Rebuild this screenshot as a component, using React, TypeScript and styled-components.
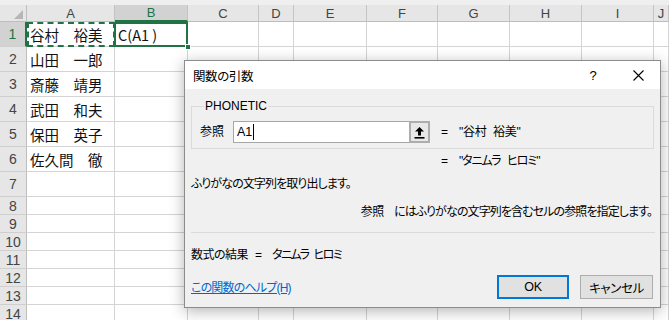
import React from "react";
import styled, { createGlobalStyle, css } from "styled-components";

const GlobalStyle = createGlobalStyle`
  html, body { margin: 0; padding: 0; background: #ffffff; overflow: hidden; }
  * { box-sizing: border-box; }
`;

const GREEN = "#217346";
const COLS = [27, 88, 73, 71, 35, 73, 71, 72, 72, 72];
const LETTERS = ["A", "B", "C", "D", "E", "F", "G", "H", "I", "J"];
const ROWS = [25, 25, 25, 25, 25, 25, 25, 18, 18, 18, 18, 18, 18, 18];
const NAMES = ["谷村　裕美", "山田　一郎", "斎藤　靖男", "武田　和夫", "保田　英子", "佐久間　徹"];

const Page = styled.div`
  position: relative;
  width: 669px;
  height: 320px;
  overflow: hidden;
  background: #ffffff;
`;

const Sheet = styled.div`
  display: flex;
  flex-direction: column;
`;

const TopStrip = styled.div`
  height: 5px;
  background: #efefef;
`;

const Grid = styled.div`
  display: grid;
  grid-template-columns: ${COLS.map((c) => c + "px").join(" ")} 1fr;
  grid-template-rows: 17px ${ROWS.map((r) => r + "px").join(" ")};
`;

const Corner = styled.div`
  background: #e6e6e6;
  border-right: 1px solid #bdbdbd;
  border-bottom: 1px solid #bdbdbd;
  display: flex;
  align-items: flex-end;
  justify-content: flex-end;
  padding: 0 3px 2px 0;
`;

const headerText = css`
  font-family: "Liberation Sans", "DejaVu Sans", sans-serif;
  font-size: 13px;
  color: #444;
`;

const ColHeader = styled.div<{ $active?: boolean }>`
  ${headerText};
  background: ${(p) => (p.$active ? "#d2d2d2" : "#e6e6e6")};
  color: ${(p) => (p.$active ? GREEN : "#444")};
  border-right: 1px solid #c4c4c4;
  border-bottom: ${(p) => (p.$active ? `2px solid ${GREEN}` : "1px solid #bdbdbd")};
  display: flex;
  align-items: center;
  justify-content: center;
  line-height: 1;
`;

const RowHeader = styled.div<{ $active?: boolean }>`
  ${headerText};
  font-size: 14px;
  background: ${(p) => (p.$active ? "#d2d2d2" : "#e6e6e6")};
  color: ${(p) => (p.$active ? GREEN : "#444")};
  border-right: ${(p) => (p.$active ? `2px solid ${GREEN}` : "1px solid #bdbdbd")};
  border-bottom: 1px solid #cfcfcf;
  display: flex;
  align-items: center;
  justify-content: center;
`;

const Cell = styled.div<{ $marquee?: boolean; $active?: boolean }>`
  position: relative;
  border-right: 1px solid #d4d4d4;
  border-bottom: 1px solid #d4d4d4;
  font-family: "Noto Sans CJK JP", sans-serif;
  font-size: 14.5px;
  color: #111;
  display: flex;
  align-items: center;
  padding: 1px 0 0 3px;
  white-space: nowrap;
  ${(p) =>
    p.$marquee &&
    css`
      &::after {
        content: "";
        position: absolute;
        left: 0;
        top: 0;
        right: -1px;
        bottom: -1px;
        border: 2px dashed ${GREEN};
        z-index: 2;
      }
    `}
  ${(p) =>
    p.$active &&
    css`
      &::after {
        content: "";
        position: absolute;
        left: -1px;
        top: 0;
        right: -1px;
        bottom: -1px;
        border: 2px solid ${GREEN};
        z-index: 3;
      }
    `}
`;

const FillHandle = styled.span`
  position: absolute;
  right: -4px;
  bottom: -4px;
  width: 6px;
  height: 6px;
  background: ${GREEN};
  border: 1px solid #fff;
  z-index: 4;
`;

/* ---------- Dialog ---------- */

const Dialog = styled.div`
  position: absolute;
  left: 184px;
  top: 60px;
  width: 477px;
  height: 248px;
  border: 1px solid #8c8c8c;
  background: #f0f0f0;
  box-shadow: 0 3px 14px rgba(0, 0, 0, 0.3);
  display: flex;
  flex-direction: column;
  font-family: "Liberation Sans", "Noto Sans CJK JP", sans-serif;
  font-size: 12px;
  color: #000;
  font-feature-settings: "palt";
  z-index: 10;
`;

const jp = css`
  letter-spacing: -0.9px;
`;

const TitleBar = styled.div`
  height: 28px;
  background: #ffffff;
  display: flex;
  align-items: center;
  padding-left: 8px;
`;

const Title = styled.span`
  flex: 1;
  font-size: 12.5px;
  padding-top: 1px;
  letter-spacing: -0.4px;
`;

const TitleButton = styled.span<{ $w: number }>`
  width: ${(p) => p.$w}px;
  height: 28px;
  display: flex;
  align-items: center;
  justify-content: center;
  font-size: 13px;
`;

const Body = styled.div`
  flex: 1;
  display: flex;
  flex-direction: column;
  padding: 0 6px;
`;

const GroupBox = styled.fieldset`
  margin: 10px 0 0 0;
  padding: 8px 8px 5px 8px;
  border: 1px solid #dadada;
  min-width: 0;
`;

const Legend = styled.legend`
  padding: 0 1px;
  margin-left: 4px;
  line-height: 14px;
  font-size: 12px;
`;

const ArgRow = styled.div`
  display: flex;
  align-items: center;
  height: 22px;
`;

const ArgLabel = styled.span`
  width: 33px;
  line-height: 14px;
`;

const InputBox = styled.div`
  width: 197px;
  height: 22px;
  border: 1px solid #a6a6a6;
  background: #ffffff;
  display: flex;
  align-items: center;
`;

const InputText = styled.span`
  flex: 1;
  display: flex;
  align-items: center;
  padding-left: 3px;
  font-size: 12.5px;
`;

const Caret = styled.span`
  display: inline-block;
  width: 1px;
  height: 16px;
  background: #000;
  margin-left: 1px;
`;

const RefButton = styled.span`
  width: 21px;
  height: 22px;
  margin: -1px -1px -1px 0;
  border: 2px solid #adadad;
  background: #e8e8e8;
  display: flex;
  align-items: center;
  justify-content: center;
`;

const Result = styled.span`
  display: flex;
  align-items: center;
  margin-left: 11px;
  line-height: 14px;
  white-space: pre;
`;

const Eq = styled.span`
  width: 18px;
`;

const Value = styled.span<{ $tight?: boolean }>`
  letter-spacing: ${(p) => (p.$tight ? "-1.1px" : "-0.2px")};
`;

const ValueLine = styled.div`
  margin-top: 5px;
  padding-left: 250px;
  line-height: 14px;
  display: flex;
  white-space: pre;
`;

const Desc = styled.div`
  ${jp};
  margin-top: 9px;
  line-height: 14px;
`;

const ArgDesc = styled.div`
  ${jp};
  margin-top: 14px;
  line-height: 14px;
  text-align: right;
  padding-right: 2px;
`;

const ArgName = styled.span`
  margin-right: 10px;
  letter-spacing: -0.3px;
`;

const Separator = styled.div`
  margin-top: 13px;
  height: 1px;
  margin-right: -1px;
  background: #dadada;
`;

const FormulaResult = styled.div`
  margin-top: 15px;
  line-height: 14px;
  display: flex;
  white-space: pre;
`;

const ResultLabel = styled.span`
  margin-right: 7px;
  letter-spacing: -0.5px;
`;

const ResultEq = styled.span`
  margin-right: 10px;
`;

const ResultValue = styled.span`
  letter-spacing: -1.6px;
`;

const Footer = styled.div`
  margin-top: 13px;
  height: 24px;
  display: flex;
  align-items: center;
  padding-right: 1px;
`;

const HelpLink = styled.a`
  flex: 1;
  color: #0066cc;
  text-decoration: underline;
  line-height: 14px;
  padding-top: 1px;
  letter-spacing: -0.8px;
`;

const Button = styled.button<{ $default?: boolean; $w: number }>`
  width: ${(p) => p.$w}px;
  height: 24px;
  margin-left: 11px;
  font-family: inherit;
  font-size: 12.5px;
  font-feature-settings: "palt";
  color: #000;
  background: #e1e1e1;
  border: ${(p) => (p.$default ? "2px solid #0078d7" : "1px solid #adadad")};
  padding: 0;
  display: flex;
  align-items: center;
  justify-content: center;
  letter-spacing: -0.4px;
`;

const UploadIcon = () => (
  <svg width="11" height="13" viewBox="0 0 11 13">
    <path d="M5.5 1 L10 5.5 H7 V9.5 H4 V5.5 H1 Z" fill="#000" />
    <rect x="0.5" y="11" width="10" height="1.6" fill="#000" />
  </svg>
);

const CloseIcon = () => (
  <svg width="11" height="11" viewBox="0 0 11 11">
    <path d="M0.5 0.5 L10.5 10.5 M10.5 0.5 L0.5 10.5" stroke="#000" strokeWidth="1.1" fill="none" />
  </svg>
);

const CornerTriangle = () => (
  <svg width="9" height="9" viewBox="0 0 9 9">
    <polygon points="9,0 9,9 0,9" fill="#b6b6b6" />
  </svg>
);

export default function App() {
  const cells: React.ReactNode[] = [];
  cells.push(
    <Corner key="corner">
      <CornerTriangle />
    </Corner>
  );
  LETTERS.forEach((l, i) =>
    cells.push(
      <ColHeader key={"h" + l} $active={i === 1}>
        {l}
      </ColHeader>
    )
  );
  ROWS.forEach((_, r) => {
    cells.push(
      <RowHeader key={"r" + r} $active={r === 0}>
        {r + 1}
      </RowHeader>
    );
    LETTERS.forEach((l, c) => {
      const key = `c${r}-${c}`;
      if (r === 0 && c === 0) {
        cells.push(
          <Cell key={key} $marquee>
            {NAMES[0]}
          </Cell>
        );
      } else if (r === 0 && c === 1) {
        cells.push(
          <Cell key={key} $active>
            C(A1 )
            <FillHandle />
          </Cell>
        );
      } else if (c === 0 && r < NAMES.length) {
        cells.push(<Cell key={key}>{NAMES[r]}</Cell>);
      } else {
        cells.push(<Cell key={key} />);
      }
    });
  });

  return (
    <Page>
      <GlobalStyle />
      <Sheet>
        <TopStrip />
        <Grid>{cells}</Grid>
      </Sheet>

      <Dialog>
        <TitleBar>
          <Title>関数の引数</Title>
          <TitleButton $w={46}>?</TitleButton>
          <TitleButton $w={44}>
            <CloseIcon />
          </TitleButton>
        </TitleBar>
        <Body>
          <GroupBox>
            <Legend>PHONETIC</Legend>
            <ArgRow>
              <ArgLabel>参照</ArgLabel>
              <InputBox>
                <InputText>
                  A1
                  <Caret />
                </InputText>
                <RefButton>
                  <UploadIcon />
                </RefButton>
              </InputBox>
              <Result>
                <Eq>=</Eq>
                <Value>"谷村  裕美"</Value>
              </Result>
            </ArgRow>
          </GroupBox>
          <ValueLine>
            <Eq>=</Eq>
            <Value $tight>"タニムラ   ヒロミ"</Value>
          </ValueLine>
          <Desc>ふりがなの文字列を取り出します。</Desc>
          <ArgDesc>
            <ArgName>参照</ArgName>にはふりがなの文字列を含むセルの参照を指定します。
          </ArgDesc>
          <Separator />
          <FormulaResult>
            <ResultLabel>数式の結果</ResultLabel>
            <ResultEq>=</ResultEq>
            <ResultValue>タニムラ   ヒロミ</ResultValue>
          </FormulaResult>
          <Footer>
            <HelpLink>この関数のヘルプ(H)</HelpLink>
            <Button $default $w={72}>
              OK
            </Button>
            <Button $w={73}>キャンセル</Button>
          </Footer>
        </Body>
      </Dialog>
    </Page>
  );
}
